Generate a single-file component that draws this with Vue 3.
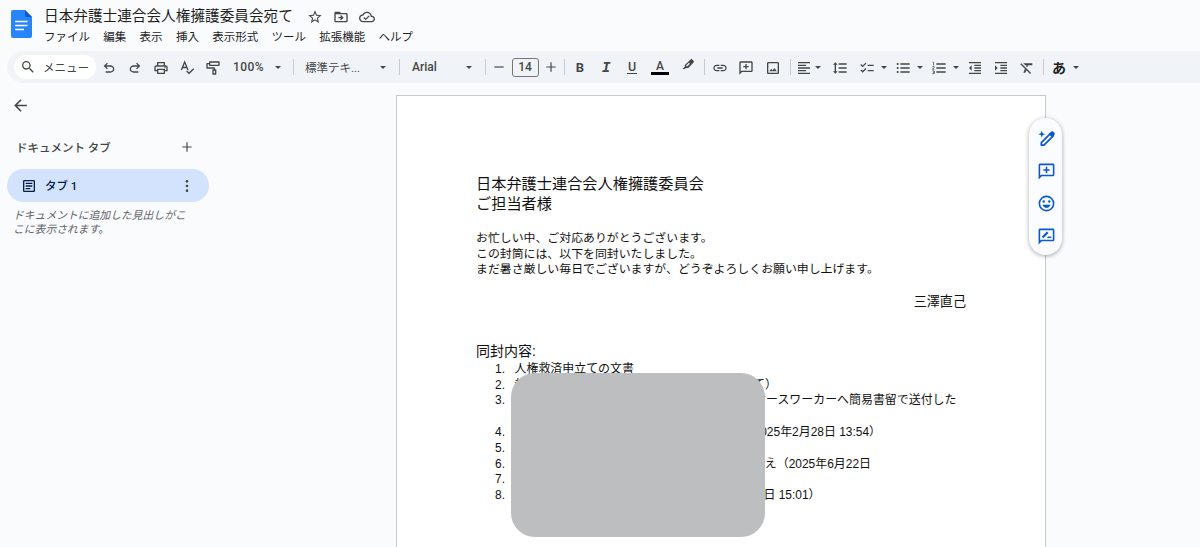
<script setup>
import { ref } from 'vue';

const menus = ['ファイル', '編集', '表示', '挿入', '表示形式', 'ツール', '拡張機能', 'ヘルプ'];

const icons = {
  star: '<path d="M22 9.24l-7.19-.62L12 2 9.19 8.63 2 9.24l5.46 4.73L5.82 21 12 17.27 18.18 21l-1.63-7.03L22 9.24zM12 15.4l-3.76 2.27 1-4.28-3.32-2.88 4.38-.38L12 6.1l1.71 4.04 4.38.38-3.32 2.88 1 4.28L12 15.4z"/>',
  move: '<path d="M20 6h-8l-2-2H4c-1.1 0-2 .9-2 2v12c0 1.1.9 2 2 2h16c1.1 0 2-.9 2-2V8c0-1.1-.9-2-2-2zm0 12H4V8h16v10zM12 17l4-4-4-4-1.4 1.4 1.6 1.6H8v2h4.2l-1.6 1.6L12 17z"/>',
  cloud: '<path d="M19.35 10.04C18.67 6.59 15.64 4 12 4 9.11 4 6.61 5.64 5.36 8.04 2.35 8.36 0 10.9 0 14c0 3.31 2.69 6 6 6h13c2.76 0 5-2.24 5-5 0-2.64-2.05-4.78-4.65-4.96zM19 18H6c-2.21 0-4-1.79-4-4 0-2.05 1.53-3.76 3.56-3.97l1.07-.11.5-.95C8.08 7.14 9.94 6 12 6c2.62 0 4.88 1.86 5.39 4.43l.3 1.5 1.53.11c1.56.1 2.78 1.41 2.78 2.96 0 1.65-1.35 3-3 3zm-9-3.82l-2.09-2.09L6.5 13.5 10 17l6.01-6.01-1.41-1.41z"/>',
  search: '<path d="M15.5 14h-.79l-.28-.27A6.47 6.47 0 0 0 16 9.5 6.5 6.5 0 1 0 9.5 16c1.61 0 3.09-.59 4.23-1.57l.27.28v.79l5 4.99L20.49 19l-4.99-5zm-6 0a4.5 4.5 0 1 1 0-9 4.5 4.5 0 0 1 0 9z"/>',
  undo: '<path d="M7 19v-2h7.1c1.05 0 1.96-.33 2.74-1 .77-.67 1.16-1.5 1.16-2.5s-.39-1.83-1.16-2.5c-.78-.67-1.69-1-2.74-1H7.8l2.6 2.6L9 14 4 9l5-5 1.4 1.4L7.8 8h6.3c1.62 0 3.01.53 4.17 1.58C19.42 10.63 20 11.93 20 13.5s-.58 2.88-1.73 3.93C17.11 18.48 15.72 19 14.1 19H7z"/>',
  redo: '<path d="M17 19v-2H9.9c-1.05 0-1.96-.33-2.74-1C6.39 15.33 6 14.5 6 13.5s.39-1.83 1.16-2.5c.78-.67 1.69-1 2.74-1h6.3l-2.6 2.6L15 14l5-5-5-5-1.4 1.4L16.2 8H9.9c-1.62 0-3.01.53-4.17 1.58C4.58 10.63 4 11.93 4 13.5s.58 2.88 1.73 3.93C6.89 18.48 8.28 19 9.9 19H17z"/>',
  print: '<path d="M19 8h-1V3H6v5H5c-1.66 0-3 1.34-3 3v6h4v4h12v-4h4v-6c0-1.66-1.34-3-3-3zM8 5h8v3H8V5zm8 14H8v-4h8v4zm2-4v-2H6v2H4v-4c0-.55.45-1 1-1h14c.55 0 1 .45 1 1v4h-2z"/><circle cx="18" cy="11.5" r="1"/>',
  spell: '<path d="M3.500 15L8.500 3l5 12M5.500 11.200h6" fill="none" stroke="currentColor" stroke-width="2"/><path d="M11.500 16.500l3.500 3.500 7-7" fill="none" stroke="currentColor" stroke-width="2"/>',
  paint: '<path d="M7 3h14v5H7zM7 5.500H3V12h11v3M12 15h4v6h-4z" fill="none" stroke="currentColor" stroke-width="2" stroke-linejoin="round"/>',
  minus: '<path d="M4 11h16v2H4z"/>',
  plus: '<path d="M20 13h-7v7h-2v-7H4v-2h7V4h2v7h7z"/>',
  marker: '<path d="M16.500 2.500c.8-.8 2-.8 2.800 0l2.200 2.200c.8.8.8 2 0 2.800L12.500 17H8.500l-2 2H2.500l4-4v-3z"/><path d="M9.500 13.800l5-5" stroke="#f0f4f9" stroke-width="2.400"/>',
  link: '<path d="M3.900 12c0-1.710 1.390-3.100 3.100-3.100h4V7H7c-2.760 0-5 2.240-5 5s2.240 5 5 5h4v-1.900H7c-1.710 0-3.100-1.390-3.100-3.100zM8 13h8v-2H8v2zm9-6h-4v1.900h4c1.710 0 3.100 1.390 3.100 3.100s-1.390 3.100-3.100 3.100h-4V17h4c2.760 0 5-2.240 5-5s-2.240-5-5-5z"/>',
  comment: '<path d="M2 22V4c0-1.100.9-2 2-2h16c1.100 0 2 .9 2 2v12c0 1.100-.9 2-2 2H6l-4 4zM4 17.200L5.200 16H20V4H4v13.200zM11 14h2v-3h3V9h-3V6h-2v3H8v2h3z"/>',
  image: '<path d="M19 5v14H5V5h14m0-2H5c-1.100 0-2 .9-2 2v14c0 1.100.9 2 2 2h14c1.100 0 2-.9 2-2V5c0-1.100-.9-2-2-2zm-4.900 9.100l-2.800 3.600-2-2.400L6.500 17h11.200z"/>',
  align: '<path d="M3 3h18v2H3zM3 7h12v2H3zM3 11h18v2H3zM3 15h12v2H3zM3 19h18v2H3z"/>',
  spacing: '<path d="M6 7h2.500L5 3.500 1.500 7H4v10H1.500L5 20.500 8.500 17H6V7zm4-2v2h12V5H10zm0 14h12v-2H10v2zm0-6h12v-2H10v2z"/>',
  checklist: '<path d="M22 7h-9v2h9V7zm0 8h-9v2h9v-2zM5.500 11L2 7.500l1.400-1.400 2.100 2.100 4.300-4.200 1.400 1.400L5.500 11zm0 8L2 15.500l1.400-1.400 2.100 2.100 4.300-4.200 1.400 1.400L5.500 19z"/>',
  bullets: '<path d="M4 10.500c-.83 0-1.500.67-1.500 1.500s.67 1.500 1.500 1.500 1.500-.67 1.500-1.500-.67-1.500-1.500-1.500zm0-6C3.170 4.500 2.500 5.170 2.500 6S3.170 7.500 4 7.500 5.500 6.830 5.500 6 4.830 4.500 4 4.500zm0 12c-.83 0-1.500.68-1.500 1.500s.68 1.500 1.500 1.500 1.500-.68 1.500-1.500-.67-1.500-1.500-1.500zM8 19h14v-2H8v2zm0-6h14v-2H8v2zm0-8v2h14V5H8z"/>',
  numbers: '<path d="M8 19h14v-2H8zM8 13h14v-2H8zM8 5v2h14V5z"/><path d="M2.500 3.500h1.300V8M2 10h2.800v1L2.200 14H5M2 16.500h3v4H2M3 18.500h2" fill="none" stroke="currentColor" stroke-width="1.200"/>',
  outdent: '<path d="M3 3h18v2H3zM11 7h10v2H11zM11 11h10v2H11zM11 15h10v2H11zM3 19h18v2H3zM7 8v8l-4-4z"/>',
  indent: '<path d="M3 3h18v2H3zM11 7h10v2H11zM11 11h10v2H11zM11 15h10v2H11zM3 19h18v2H3zM3 8v8l4-4z"/>',
  clear: '<path d="M20 8V5H6.390l3 3h1.830l-.55 1.280 1.710 1.710L13.660 8H20zM3.410 4.860L2 6.270l6.970 6.970L6.500 19h3l1.570-3.660L16.730 21l1.410-1.410L3.410 4.860z"/>',
  back: '<path d="M20 11H7.830l5.590-5.590L12 4l-8 8 8 8 1.410-1.410L7.830 13H20z"/>',
  doc: '<path d="M19 5v14H5V5h14m0-2H5c-1.100 0-2 .9-2 2v14c0 1.100.9 2 2 2h14c1.100 0 2-.9 2-2V5c0-1.100-.9-2-2-2zM7 7h10v2H7zM7 11h10v2H7zM7 15h7v2H7z"/>',
  more: '<circle cx="12" cy="5" r="2"/><circle cx="12" cy="12" r="2"/><circle cx="12" cy="19" r="2"/>',
  magic: '<path d="M6 2l1.200 3.300L10.500 6.500 7.200 7.700 6 11 4.800 7.700 1.500 6.500l3.300-1.200z"/><path d="M5.500 20.500v-3.300L17.200 5.500l3.300 3.300L8.800 20.500z" fill="none" stroke="currentColor" stroke-width="2.200" stroke-linejoin="round"/><path d="M15 6.500l3-3c.8-.8 1.900-.8 2.700 0l1.200 1.200c.8.8.8 1.900 0 2.700l-3 3z"/>',
  emoji: '<path d="M12 2a10 10 0 1 0 0 20 10 10 0 0 0 0-20zm0 18a8 8 0 1 1 0-16 8 8 0 0 1 0 16z"/><circle cx="8.500" cy="9.500" r="1.500"/><circle cx="15.500" cy="9.500" r="1.500"/><path d="M6.900 13.500c.8 2.300 2.800 4 5.100 4s4.300-1.700 5.100-4z"/>',
  suggest: '<path d="M2 22V4c0-1.100.9-2 2-2h16c1.100 0 2 .9 2 2v12c0 1.100-.9 2-2 2H6l-4 4zM4 17.200L5.200 16H20V4H4v13.200z"/><path d="M7 13.200l6.500-6.500" stroke="currentColor" stroke-width="2.800"/><path d="M12.500 14l2-2H18v2z"/>'
};

// w: ancho de cada celda de la barra
const tools = [
  { icon: 'undo', w: 26 },
  { icon: 'redo', w: 26 },
  { icon: 'print', w: 26 },
  { icon: 'spell', w: 26 },
  { icon: 'paint', w: 26 },
  { text: '100%', w: 44, cls: 'zoom' },
  { caret: true, w: 16 },
  { sep: true, w: 14 },
  { text: '標準テキ...', w: 70, cls: 'style' },
  { caret: true, w: 26 },
  { sep: true, w: 6 },
  { text: 'Arial', w: 54, cls: 'font' },
  { caret: true, w: 26 },
  { sep: true, w: 7 },
  { icon: 'minus', w: 20, cls: 'small' },
  { text: '14', w: 32, cls: 'size' },
  { icon: 'plus', w: 20, cls: 'small' },
  { sep: true, w: 7 },
  { text: 'B', w: 24, cls: 'bold' },
  { text: 'I', w: 28, cls: 'italic' },
  { text: 'U', w: 24, cls: 'underline' },
  { text: 'A', w: 32, cls: 'color' },
  { icon: 'marker', w: 24, cls: 'raised' },
  { sep: true, w: 8 },
  { icon: 'link', w: 24 },
  { icon: 'comment', w: 28 },
  { icon: 'image', w: 26 },
  { sep: true, w: 8 },
  { icon: 'align', w: 20 },
  { caret: true, w: 8 },
  { icon: 'spacing', w: 36 },
  { icon: 'checklist', w: 18 },
  { caret: true, w: 16 },
  { icon: 'bullets', w: 22 },
  { caret: true, w: 12 },
  { icon: 'numbers', w: 26 },
  { caret: true, w: 8 },
  { icon: 'outdent', w: 30 },
  { icon: 'indent', w: 22 },
  { icon: 'clear', w: 30 },
  { sep: true, w: 2 },
  { text: 'あ', w: 30, cls: 'kana' },
  { caret: true, w: 4 }
];

// end: posición donde acaba el texto de cada línea
const items = ref([
  { n: '1.', text: '人権救済申立ての文書', end: 119 },
  { n: '2.', head: '封', text: 'て）', end: 262.5 },
  { n: '3.', text: 'ケースワーカーへ簡易書留で送付した', end: 442 },
  { n: '', text: '', end: 0 },
  { n: '4.', text: '（2025年2月28日 13:54）', end: 366.5 },
  { n: '5.', text: '', end: 0 },
  { n: '6.', text: '控え（2025年6月22日', end: 356.5 },
  { n: '7.', text: '', end: 0 },
  { n: '8.', text: '日 15:01）', end: 306 }
]);

const actions = ['magic', 'comment', 'emoji', 'suggest'];
</script>

<template>
  <div class="app">
    <header class="header">
      <svg class="logo" viewBox="0 0 21 28">
        <path d="M2 0h12l7 7v19a2 2 0 0 1-2 2H2a2 2 0 0 1-2-2V2a2 2 0 0 1 2-2z" fill="#2684fc" />
        <path d="M14 0l7 7h-5.500A1.500 1.500 0 0 1 14 5.500z" fill="#0b5bd0" />
        <path d="M4 11.500h12.500M4 15.500h12.500M4 19.500h9" stroke="#fff" stroke-width="1.500" />
      </svg>
      <div class="heading">
        <div class="title-row">
          <span class="title">日本弁護士連合会人権擁護委員会宛て</span>
          <svg v-for="i in ['star', 'move', 'cloud']" :key="i" class="icon" viewBox="0 0 24 24" v-html="icons[i]"></svg>
        </div>
        <nav class="menus">
          <span v-for="m in menus" :key="m">{{ m }}</span>
        </nav>
      </div>
    </header>

    <div class="toolbar">
      <div class="search">
        <svg class="icon" viewBox="0 0 24 24" v-html="icons.search"></svg>
        <span>メニュー</span>
      </div>
      <div v-for="(t, i) in tools" :key="i" class="tool" :class="t.cls" :style="{ width: t.w + 'px' }">
        <svg v-if="t.icon" class="icon" viewBox="0 0 24 24" v-html="icons[t.icon]"></svg>
        <i v-else-if="t.caret" class="caret"></i>
        <i v-else-if="t.sep" class="sep"></i>
        <span v-else>{{ t.text }}</span>
      </div>
    </div>

    <main class="main">
      <aside class="sidebar">
        <svg class="back" viewBox="0 0 24 24" v-html="icons.back"></svg>
        <div class="tabs-head">
          <span>ドキュメント タブ</span>
          <svg class="add" viewBox="0 0 24 24" v-html="icons.plus"></svg>
        </div>
        <div class="tab">
          <svg class="icon" viewBox="0 0 24 24" v-html="icons.doc"></svg>
          <span>タブ 1</span>
          <svg class="more" viewBox="0 0 24 24" v-html="icons.more"></svg>
        </div>
        <p class="hint">ドキュメントに追加した見出しがここに表示されます。</p>
      </aside>

      <article class="page">
        <div class="to">日本弁護士連合会人権擁護委員会<br>ご担当者様</div>
        <div class="body">
          お忙しい中、ご対応ありがとうございます。<br>
          この封筒には、以下を同封いたしました。<br>
          まだ暑さ厳しい毎日でございますが、どうぞよろしくお願い申し上げます。
        </div>
        <div class="sign">三澤直己</div>
        <div class="enclosed">同封内容:</div>
        <div class="list">
          <div v-for="(it, i) in items" :key="i" class="item">
            <span class="num">{{ it.n }}</span>
            <span class="line" :style="{ width: it.end + 'px' }">
              <span>{{ it.head }}</span>
              <span>{{ it.text }}</span>
            </span>
          </div>
          <div class="mask"></div>
        </div>
        <div class="actions">
          <svg v-for="a in actions" :key="a" viewBox="0 0 24 24" v-html="icons[a]"></svg>
        </div>
      </article>
    </main>
  </div>
</template>

<style>
body {
  margin: 0;
  background: #f9fbfd;
}
</style>

<style scoped>
.app {
  height: 547px;
  overflow: hidden;
  background: #f9fbfd;
  color: #444746;
  font-family: Roboto, "Noto Sans CJK JP", sans-serif;
  font-size: 11.5px;
}

svg {
  display: block;
  flex: none;
  fill: currentColor;
}

.icon {
  width: 16px;
  height: 16px;
}

.header {
  display: flex;
  height: 51px;
  box-sizing: border-box;
  padding: 6px 0 0 11px;
}

.logo {
  width: 21px;
  height: 28px;
  margin-top: 4px;
}

.heading {
  margin-left: 12px;
}

.title-row {
  display: flex;
  align-items: center;
  height: 20px;
  gap: 10px;
}

.title {
  font-size: 14.65px;
  line-height: 20px;
  color: #1f1f1f;
  margin-right: 4px;
}

.title-row .icon {
  margin-top: 2px;
}

.menus {
  display: flex;
  gap: 13.3px;
  line-height: 20px;
  margin-top: 1px;
  color: #1f1f1f;
}

.toolbar {
  display: flex;
  align-items: center;
  height: 32px;
  margin-left: 7px;
  padding-left: 7px;
  border-radius: 16px 0 0 16px;
  background: #f0f4f9;
}

.search {
  display: flex;
  align-items: center;
  width: 82px;
  height: 24px;
  box-sizing: border-box;
  padding-left: 6px;
  gap: 7px;
  border-radius: 12px;
  background: #fff;
  white-space: nowrap;
}

.search span {
  margin-top: -1px;
}

.tool {
  display: flex;
  flex: none;
  align-items: center;
  justify-content: center;
  height: 32px;
  white-space: nowrap;
}

.tool .icon {
  margin-top: 1px;
}

.caret {
  flex: none;
  border: solid transparent;
  border-width: 3.5px 3.5px 0;
  border-top-color: #444746;
}

.sep {
  flex: none;
  width: 1px;
  height: 16px;
  background: #c7cbd1;
}

.zoom {
  font-size: 12px;
  font-weight: 500;
  letter-spacing: 0.4px;
  padding-left: 1px;
  box-sizing: border-box;
}

.style,
.font {
  justify-content: flex-start;
  box-sizing: border-box;
  padding-left: 5px;
}

.style span {
  margin-top: -1px;
}

.font {
  padding-left: 10px;
  font-size: 12px;
  font-weight: 500;
}

.small .icon {
  width: 14px;
  height: 14px;
  margin-top: 0;
}

.size span {
  width: 25px;
  line-height: 17px;
  border: 1px solid #747775;
  border-radius: 3px;
  text-align: center;
  font-size: 12px;
  font-weight: 500;
}

.bold {
  font-size: 13px;
  font-weight: 700;
}

.italic {
  font: italic bold 14.5px "Liberation Mono", monospace;
}

.italic span {
  margin-top: 2px;
}

.underline span {
  font-size: 12.5px;
  font-weight: 500;
  line-height: 12px;
  border-bottom: 1.5px solid #444746;
  padding: 0 0.5px;
}

.color span {
  width: 18px;
  line-height: 12px;
  border-bottom: 3px solid #000;
  text-align: center;
  font-size: 12px;
  font-weight: 500;
}

.raised .icon {
  margin: 0 0 4px;
  width: 14px;
  height: 14px;
}

.kana {
  color: #1f1f1f;
  font-size: 14px;
  font-weight: 700;
}

.main {
  display: flex;
  height: 464px;
}

.sidebar {
  width: 396px;
  flex: none;
}

.back {
  width: 19px;
  height: 19px;
  margin: 13px 0 0 11px;
}

.tabs-head {
  display: flex;
  align-items: center;
  justify-content: space-between;
  width: 178px;
  height: 20px;
  margin: 22px 0 0 16px;
  font-weight: 500;
}

.add {
  width: 14px;
  height: 14px;
}

.tab {
  display: flex;
  align-items: center;
  width: 202px;
  height: 33px;
  box-sizing: border-box;
  margin: 12px 0 0 7px;
  padding: 0 14px;
  gap: 8px;
  border-radius: 17px;
  background: #d3e3fd;
  color: #041e49;
  font-weight: 500;
}

.tab span {
  margin-top: -1px;
}

.more {
  width: 16px;
  height: 16px;
  margin-left: auto;
  color: #444746;
}

.hint {
  width: 180px;
  margin: 7px 0 0 13px;
  font-size: 10.8px;
  line-height: 14px;
  font-style: italic;
  color: #5f6368;
}

.page {
  position: relative;
  flex: none;
  width: 650px;
  height: 500px;
  box-sizing: border-box;
  margin-top: 12px;
  padding: 78px 79px 0 79px;
  border: 1px solid #c7c9cc;
  background: #fff;
  color: #111;
  font-family: "Liberation Sans", "Noto Sans CJK JP", sans-serif;
}

.to {
  font-size: 15.2px;
  line-height: 19.5px;
}

.body {
  margin-top: 18px;
  font-size: 11.9px;
  line-height: 15.7px;
}

.sign {
  margin-top: 15px;
  font-size: 13.1px;
  line-height: 18px;
  text-align: right;
}

.enclosed {
  margin-top: 30px;
  font-size: 14px;
  line-height: 20px;
}

.list {
  position: relative;
  padding-top: 0.7px;
  font-size: 11.95px;
  line-height: 15.8px;
}

.item {
  display: flex;
  height: 15.8px;
}

.num {
  width: 38.5px;
  text-indent: 19px;
}

.line {
  display: flex;
  justify-content: space-between;
  white-space: pre;
}

.mask {
  position: absolute;
  left: 35px;
  top: 12px;
  width: 254px;
  height: 164px;
  border-radius: 24px;
  background: #bcbec0;
}

.actions {
  position: absolute;
  top: 22px;
  right: -17px;
  display: flex;
  flex-direction: column;
  align-items: center;
  justify-content: space-between;
  width: 33px;
  height: 137px;
  box-sizing: border-box;
  padding: 11px 0 9px 1px;
  border-radius: 17px;
  background: #fafcff;
  box-shadow: 0 1px 4px rgba(60, 64, 67, 0.45);
  color: #0b57d0;
}

.actions svg {
  width: 19px;
  height: 19px;
}
</style>
